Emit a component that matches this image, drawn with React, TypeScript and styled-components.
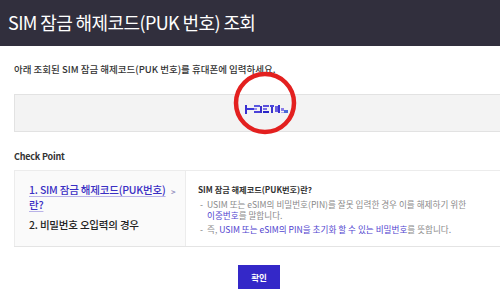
import React from "react";
import styled, { createGlobalStyle } from "styled-components";

const Global = createGlobalStyle`
  html, body { margin: 0; padding: 0; overflow: hidden; background: #fff; }
  body { font-family: "Noto Sans CJK KR", "Noto Sans", sans-serif; }
  * { box-sizing: border-box; }
`;

const Page = styled.div`
  width: 500px;
  height: 299px;
  overflow: hidden;
`;

const Header = styled.header`
  height: 46px;
  background: #312f3d;
  display: flex;
  align-items: center;
  padding: 0 0 2px 8px;
  color: #fff;
  font-size: 18px;
  letter-spacing: -0.6px;
`;

const Main = styled.main`
  margin-left: 14px;
  width: 490px;
  display: flex;
  flex-direction: column;
`;

const Intro = styled.p`
  margin: 16px 0 0;
  font-size: 9.5px;
  line-height: 14px;
  font-weight: 500;
  color: #333;
`;

const CodeBox = styled.div`
  position: relative;
  margin-top: 18px;
  height: 38px;
  background: #f3f3f3;
  border: 1px solid #e2e2e2;
  border-right: none;
  display: flex;
  align-items: center;
  justify-content: center;
`;

const Mosaic = styled.svg`
  margin: -8px 0 0 14px;
`;

const Circle = styled.svg`
  position: absolute;
  left: 217px;
  top: -25px;
  pointer-events: none;
`;

const CheckTitle = styled.h3`
  margin: 18px 0 0;
  font-size: 9px;
  line-height: 14px;
  font-weight: 600;
  color: #333;
  letter-spacing: -0.2px;
`;

const Table = styled.div`
  margin-top: 6px;
  height: 77px;
  display: grid;
  grid-template-columns: 172px 1fr;
  border-top: 1px solid #ececec;
  border-bottom: 1px solid #e4e4e4;
`;

const Side = styled.ul`
  margin: 0;
  padding: 11px 0 0 14px;
  list-style: none;
  background: #fafafa;
  border-left: 1px solid #ececec;
  border-right: 1px solid #ececec;
  display: flex;
  flex-direction: column;
  gap: 5px;
`;

const SideItem = styled.li<{ $active?: boolean }>`
  position: relative;
  font-size: 10.5px;
  line-height: 15px;
  font-weight: 500;
  letter-spacing: -0.2px;
  color: ${(p) => (p.$active ? "#3a2fc4" : "#222")};
  text-decoration: ${(p) => (p.$active ? "underline" : "none")};
  text-decoration-color: #b8b2e8;
  text-underline-offset: 2px;
`;

const Chevron = styled.span`
  position: absolute;
  left: 142px;
  top: 2px;
  font-size: 8px;
  color: #8a86b8;
`;

const Detail = styled.div`
  padding: 12px 0 0 12px;
`;

const DetailTitle = styled.div`
  font-size: 8.2px;
  line-height: 12px;
  font-weight: 700;
  color: #333;
  margin-bottom: 4px;
`;

const Bullets = styled.ul`
  margin: 0;
  padding: 0;
  list-style: none;
  display: flex;
  flex-direction: column;
  gap: 3px;
`;

const Bullet = styled.li`
  display: flex;
  gap: 4px;
  font-size: 8.6px;
  line-height: 11px;
  color: #8a8a8a;
  padding-left: 2px;
  width: 290px;
`;

const Dash = styled.span`
  flex: none;
  color: #777;
`;

const Em = styled.span`
  color: #5144cf;
`;

const Footer = styled.div`
  display: flex;
  justify-content: center;
  margin-top: 18px;
`;

const Button = styled.button`
  width: 42px;
  height: 24px;
  border: none;
  background: #3428c8;
  color: #fff;
  font-family: inherit;
  font-size: 8.5px;
  font-weight: 700;
  padding: 0;
  cursor: pointer;
`;

const tiles: [number, number, number, number, string][] = [
  [0, 0, 2, 9, "#3a2fd0"],
  [2, 3, 7, 2, "#3a38d8"],
  [9, 0, 6, 2, "#5a58e0"],
  [9, 6, 6, 2, "#4a40d8"],
  [9, 3, 3, 2, "#9a90ee"],
  [15, 1, 2, 7, "#3a30cc"],
  [18, 0, 6, 2, "#5a50dc"],
  [18, 3, 4, 2, "#7870e4"],
  [18, 6, 6, 2, "#2a26c8"],
  [25, 0, 4, 2, "#4a48dc"],
  [26, 2, 2, 6, "#3a34cc"],
  [30, 1, 3, 6, "#6a60e0"],
  [33, 0, 2, 8, "#3a30d0"],
  [36, 3, 3, 3, "#8a7ce8"],
  [39, 5, 4, 3, "#4c6ad8"],
  [36, 7, 3, 1, "#b0a8f0"],
];

export default function App() {
  return (
    <Page>
      <Global />
      <Header>SIM 잠금 해제코드(PUK 번호) 조회</Header>
      <Main>
        <Intro>아래 조회된 SIM 잠금 해제코드(PUK 번호)를 휴대폰에 입력하세요.</Intro>
        <CodeBox>
          <Mosaic width="44" height="9" viewBox="0 0 44 9" aria-label="PUK 번호">
            {tiles.map(([x, y, w, h, c], i) => (
              <rect key={i} x={x} y={y} width={w} height={h} fill={c} />
            ))}
          </Mosaic>
          <Circle width="66" height="66" viewBox="0 0 66 66">
            <circle cx="33" cy="33" r="29" fill="none" stroke="#e3201f" strokeWidth="4.5" />
          </Circle>
        </CodeBox>
        <CheckTitle>Check Point</CheckTitle>
        <Table>
          <Side>
            <SideItem $active>
              1. SIM 잠금 해제코드(PUK번호)
              <br />
              란?
              <Chevron>&gt;</Chevron>
            </SideItem>
            <SideItem>2. 비밀번호 오입력의 경우</SideItem>
          </Side>
          <Detail>
            <DetailTitle>SIM 잠금 해제코드(PUK번호)란?</DetailTitle>
            <Bullets>
              <Bullet>
                <Dash>-</Dash>
                <span>
                  USIM 또는 eSIM의 비밀번호(PIN)를 잘못 입력한 경우 이를 해제하기 위한
                  <br />
                  <Em>이중번호</Em>를 말합니다.
                </span>
              </Bullet>
              <Bullet>
                <Dash>-</Dash>
                <span>
                  즉, <Em>USIM 또는 eSIM의 PIN을 초기화 할 수 있는 비밀번호</Em>를 뜻합니다.
                </span>
              </Bullet>
            </Bullets>
          </Detail>
        </Table>
        <Footer>
          <Button>확인</Button>
        </Footer>
      </Main>
    </Page>
  );
}
